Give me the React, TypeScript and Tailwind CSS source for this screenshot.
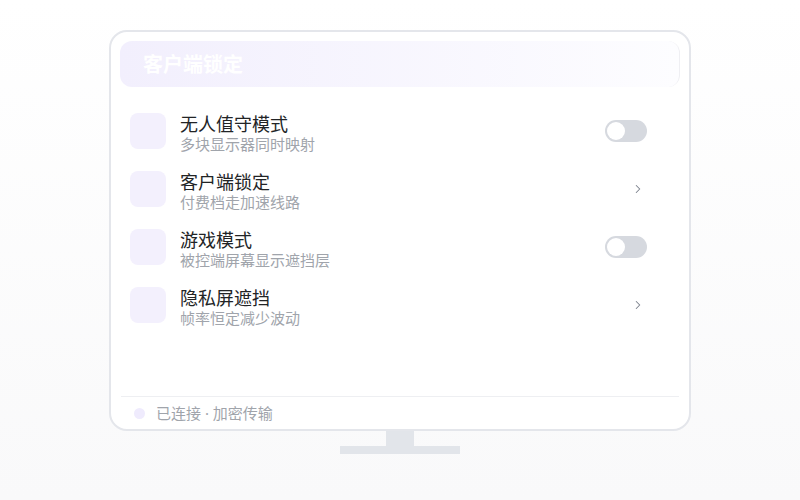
import { ChevronRight } from 'lucide-react'

type Row = {
  title: string
  desc: string
  kind: 'toggle' | 'link'
}

const ROWS: Row[] = [
  { title: '无人值守模式', desc: '多块显示器同时映射', kind: 'toggle' },
  { title: '客户端锁定', desc: '付费档走加速线路', kind: 'link' },
  { title: '游戏模式', desc: '被控端屏幕显示遮挡层', kind: 'toggle' },
  { title: '隐私屏遮挡', desc: '帧率恒定减少波动', kind: 'link' },
]

const font = { fontFamily: '"Noto Sans CJK SC", "Noto Sans", sans-serif' }

const Toggle = () => (
  <div className="w-[42px] h-[22px] rounded-full bg-[#d6d9df] p-[2px] flex items-center">
    <div className="w-[18px] h-[18px] rounded-full bg-white" />
  </div>
)

const App = () => {
  return (
    <div
      className="w-[800px] h-[500px] bg-gradient-to-b from-white to-[#f9f9fa] flex flex-col items-center pt-[30px]"
      style={font}
    >
      {/* monitor screen */}
      <div className="w-[582px] h-[401px] border-2 border-[#e4e6eb] rounded-[18px] bg-white px-[9px] pt-[9px] flex flex-col">
        {/* title bar */}
        <div className="h-[46px] rounded-xl bg-gradient-to-r from-[#f2effd] to-[#fdfdff] border-r border-[#efeff3] flex items-center px-[23px]">
          <span className="text-white text-[20px] font-semibold leading-none">客户端锁定</span>
        </div>

        <div className="flex-1 pt-[15px]">
          {ROWS.map((row) => (
            <div key={row.title} className="h-[58px] flex items-center pl-[10px] pr-[33px]">
              <div className="w-[36px] h-[36px] rounded-lg bg-[#f3f0fd] shrink-0" />
              <div className="ml-[14px] flex-1 flex flex-col pt-[4px]">
                <span className="text-[18px] leading-[22px] text-[#222426]">{row.title}</span>
                <span className="text-[15px] leading-[20px] text-[#a0a4ab]">{row.desc}</span>
              </div>
              <div className="w-[42px] flex justify-end">
                {row.kind === 'toggle' ? (
                  <Toggle />
                ) : (
                  <ChevronRight className="w-[14px] h-[14px] text-[#7b818c] mr-[2px]" strokeWidth={1.8} />
                )}
              </div>
            </div>
          ))}
        </div>

        {/* status footer */}
        <div className="h-[33px] mx-[1px] border-t border-[#eeeff2] flex items-center pl-[13px]">
          <div className="w-[11px] h-[11px] rounded-full bg-[#efebfd]" />
          <span className="ml-[11px] text-[15px] text-[#a0a4ab]">
            已连接<span style={{ fontFamily: '"Noto Sans", sans-serif' }}> · </span>加密传输
          </span>
        </div>
      </div>

      {/* stand */}
      <div className="w-[28px] h-[15px] bg-[#e2e5ea]" />
      <div className="w-[120px] h-[8px] bg-[#e2e5ea]" />
    </div>
  )
}

export default App
